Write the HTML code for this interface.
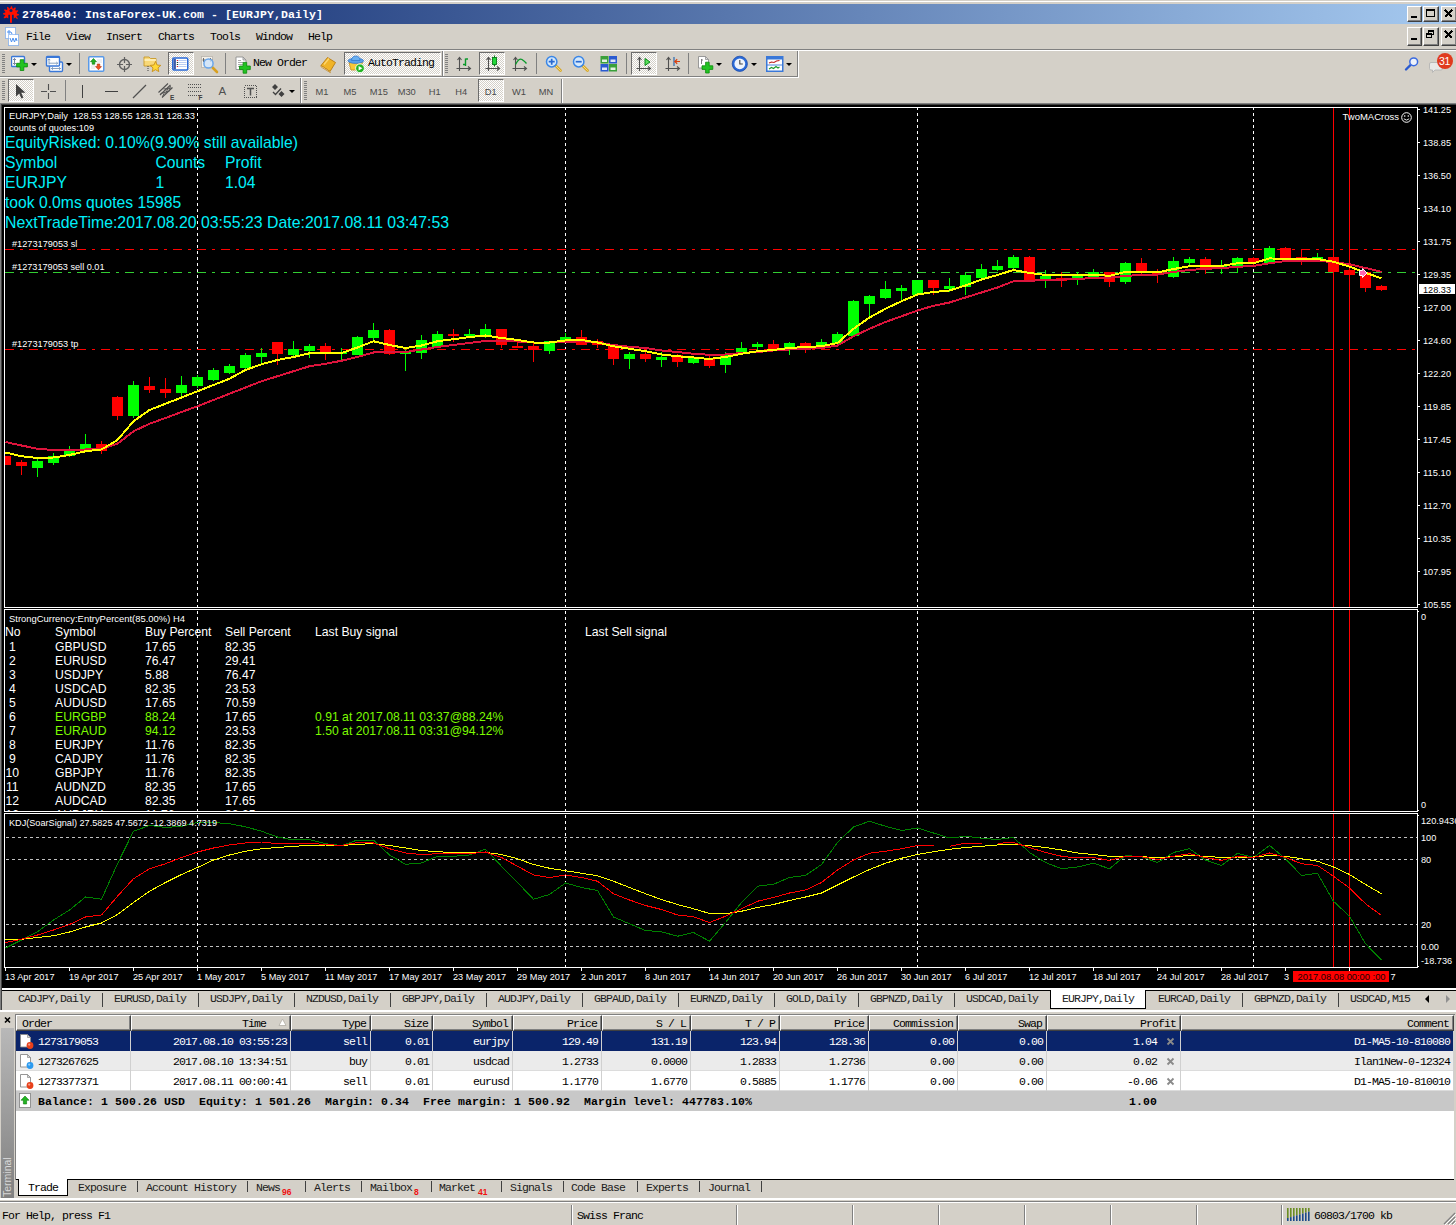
<!DOCTYPE html>
<html><head><meta charset="utf-8"><title>2785460: InstaForex-UK.com - [EURJPY,Daily]</title>
<style>
html,body{margin:0;padding:0}
body{width:1456px;height:1225px;background:#d4d0c8;position:relative;overflow:hidden;font-family:"Liberation Sans","DejaVu Sans",sans-serif;font-size:12px;color:#000}
.a{position:absolute}
.m{position:absolute;font-family:"Liberation Mono","DejaVu Sans Mono",monospace;font-size:11.5px;letter-spacing:-0.9px;white-space:pre;line-height:14px}
.mb{position:absolute;font-family:"Liberation Mono","DejaVu Sans Mono",monospace;font-size:11.5px;font-weight:bold;letter-spacing:0.1px;white-space:pre;line-height:14px}
.s{position:absolute;font-family:"Liberation Sans","DejaVu Sans",sans-serif;white-space:pre}
.btn{position:absolute;background:#d4d0c8;box-sizing:border-box;border:1px solid;border-color:#fff #404040 #404040 #fff;box-shadow:inset -1px -1px 0 #808080}
.chk{position:absolute;box-sizing:border-box;border:1px solid;border-color:#6c6c6c #fff #fff #6c6c6c;background-color:#fff;background-image:linear-gradient(45deg,#d4d0c8 25%,transparent 25%,transparent 75%,#d4d0c8 75%),linear-gradient(45deg,#d4d0c8 25%,transparent 25%,transparent 75%,#d4d0c8 75%);background-size:2px 2px;background-position:0 0,1px 1px}
.vsep{position:absolute;width:1px;background:#808080}
.bsep{position:absolute;width:1px;background:#808080;box-shadow:1px 0 0 #fff}
.grip{position:absolute;width:3px;background:repeating-linear-gradient(to bottom,#808080 0,#808080 1px,transparent 1px,transparent 2px)}
.tf{position:absolute;font-family:"Liberation Sans","DejaVu Sans",sans-serif;font-size:9.3px;color:#4a4a4a;top:86px;line-height:13px;white-space:pre}
.th{position:absolute;top:1015px;height:16px;box-sizing:border-box;background:#d4d0c8;border:1px solid;border-color:#fff #404040 #404040 #fff;box-shadow:inset -1px -1px 0 #808080}
.row{position:absolute;left:16px;width:1438px;height:20px}
.c{position:absolute;font-family:"Liberation Mono","DejaVu Sans Mono",monospace;font-size:11.5px;letter-spacing:-0.9px;white-space:pre;line-height:14px;text-align:right}
.cs{position:absolute;width:1px;height:60px;top:1031px;background:#c8c8c8}
</style></head><body>

<div class="a" style="left:0;top:1px;width:1456px;height:1px;background:#fff"></div>
<div class="a" style="left:0;top:4px;width:1456px;height:20px;background:linear-gradient(to right,#0a246a 0%,#a6caf0 100%)"></div>
<svg class="a" style="left:3px;top:6px" width="17" height="17" viewBox="0 0 17 17"><path d="M8.0 0.2 L9.0 0.3 L9.6 2.4 L10.3 2.7 L12.0 1.3 L12.9 1.9 L12.2 4.0 L12.8 4.5 L14.9 4.2 L15.4 5.1 L13.8 6.6 L13.9 7.4 L16.0 8.2 L15.9 9.2 L13.8 9.8 L13.5 10.5 L14.9 12.2 L14.3 13.1 L12.2 12.4 L11.7 13.0 L12.0 15.1 L11.1 15.6 L9.6 14.0 L8.8 14.1 L8.0 16.2 L7.0 16.1 L6.4 14.0 L5.7 13.7 L4.0 15.1 L3.1 14.5 L3.8 12.4 L3.2 11.9 L1.1 12.2 L0.6 11.3 L2.2 9.8 L2.1 9.0 L0.0 8.2 L0.1 7.2 L2.2 6.6 L2.5 5.9 L1.1 4.2 L1.7 3.3 L3.8 4.0 L4.3 3.4 L4.0 1.3 L4.9 0.8 L6.4 2.4 L7.2 2.3Z" fill="#ff1000"/>
<g fill="#0a246a"><circle cx="8" cy="4.6" r="1.5"/><rect x="5.3" y="8.8" width="1.8" height="4.4"/><rect x="8.9" y="8.8" width="1.8" height="4.4"/><path d="M3.2 11.5L7.1 13.2V17H0.5zM12.8 11.5L8.9 13.2V17H15.5z"/></g>
<rect x="7.1" y="6" width="1.8" height="10.8" fill="#ff1000"/></svg>
<div class="mb" style="left:22px;top:8px;color:#fff">2785460: InstaForex-UK.com - [EURJPY,Daily]</div>
<div class="btn" style="left:1407px;top:6px;width:15px;height:16px"></div>
<div class="a" style="left:1411px;top:16px;width:6px;height:2px;background:#000"></div>
<div class="btn" style="left:1423px;top:6px;width:16px;height:16px"></div>
<div class="a" style="left:1426px;top:9px;width:9px;height:8px;box-sizing:border-box;border:1px solid #000;border-top-width:2px"></div>
<div class="btn" style="left:1441px;top:6px;width:16px;height:16px"></div>
<svg class="a" style="left:1444px;top:9px" width="10" height="9" viewBox="0 0 10 9"><path d="M1 1 L8 8 M8 1 L1 8" stroke="#000" stroke-width="2" shape-rendering="crispEdges"/></svg>
<div class="btn" style="left:1407px;top:27px;width:15px;height:19px"></div>
<div class="a" style="left:1411px;top:38px;width:6px;height:2px;background:#000"></div>
<div class="btn" style="left:1423px;top:27px;width:16px;height:19px"></div>
<div class="a" style="left:1428px;top:30px;width:6px;height:5px;box-sizing:border-box;border:1px solid #000;border-top-width:2px"></div>
<div class="a" style="left:1426px;top:33px;width:6px;height:5px;box-sizing:border-box;border:1px solid #000;border-top-width:2px;background:#d4d0c8"></div>
<div class="btn" style="left:1441px;top:27px;width:16px;height:19px"></div>
<svg class="a" style="left:1444px;top:30px" width="10" height="9" viewBox="0 0 10 9"><path d="M1 1 L8 8 M8 1 L1 8" stroke="#000" stroke-width="2" shape-rendering="crispEdges"/></svg>
<svg class="a" style="left:4px;top:26px" width="17" height="20" viewBox="0 0 17 20"><rect x="1.5" y="1.5" width="10" height="11" fill="#fff" stroke="#4a90f0" stroke-dasharray="1 1"/><path d="M3 6h2v-2m0 4v-2h2l1 2" stroke="#4a90f0" fill="none"/><rect x="4.5" y="8.5" width="10" height="11" fill="#fff" stroke="#4a90f0" stroke-dasharray="1 1"/><path d="M6 12l1.5 4l1.5-4l1.5 4l1.5-4l1 3" stroke="#4a90f0" fill="none"/></svg>
<div class="m" style="left:26px;top:30px">File</div>
<div class="m" style="left:66px;top:30px">View</div>
<div class="m" style="left:106px;top:30px">Insert</div>
<div class="m" style="left:158px;top:30px">Charts</div>
<div class="m" style="left:210px;top:30px">Tools</div>
<div class="m" style="left:256px;top:30px">Window</div>
<div class="m" style="left:308px;top:30px">Help</div>
<div class="a" style="left:0;top:49px;width:1456px;height:1px;background:#808080"></div><div class="a" style="left:0;top:50px;width:1456px;height:1px;background:#fff"></div>
<div class="a" style="left:0;top:76px;width:798px;height:1px;background:#808080"></div><div class="a" style="left:0;top:77px;width:799px;height:1px;background:#fff"></div>
<div class="a" style="left:797px;top:51px;width:1px;height:26px;background:#808080"></div><div class="a" style="left:798px;top:51px;width:1px;height:27px;background:#fff"></div>
<div class="grip" style="left:2px;top:54px;height:20px"></div>
<svg class="a" style="left:11px;top:55px" width="19" height="19" viewBox="0 0 19 19" ><rect x="0.5" y="1.5" width="13" height="10" rx="1" fill="#fff" stroke="#3a78d8" stroke-width="1.4"/><path d="M3.5 3.5v6M2 5l1.5-1.5L5 5M2 8l1.5 1.5L5 8" stroke="#5a6a8a" fill="none" stroke-width="0.8"/><path d="M5.6 8.3h3.6v-3.6h3.6v3.6h3.6v3.6h-3.6v3.6h-3.6v-3.6h-3.6z" fill="#22c322" stroke="#0a8a0a" stroke-width="0.8"/></svg>
<div class="a" style="left:31px;top:63px;width:0;height:0;border-left:3px solid transparent;border-right:3px solid transparent;border-top:3px solid #000"></div>
<svg class="a" style="left:45px;top:55px" width="19" height="19" viewBox="0 0 19 19" ><rect x="4.5" y="7" width="13" height="9.5" rx="1" fill="#fff" stroke="#3a78d8" stroke-width="1.4"/><path d="M6.5 13.5h9M6.5 13.5l1.5-1.3M6.5 13.5l1.5 1.3M15.5 13.5l-1.5-1.3M15.5 13.5l-1.5 1.3" stroke="#6a8ab0" fill="none" stroke-width="0.8"/><rect x="1.5" y="1.5" width="13" height="9.5" rx="1" fill="#fff" stroke="#3a78d8" stroke-width="1.4"/><path d="M1.5 2.2h13" stroke="#3a78d8" stroke-width="1.6"/><path d="M4 4v5.5M2.8 5.2l1.2-1.4l1.2 1.4M4 8.2h8.5M11.3 7l1.4 1.2l-1.4 1.2" stroke="#6a8ab0" fill="none" stroke-width="0.8"/></svg>
<div class="a" style="left:66px;top:63px;width:0;height:0;border-left:3px solid transparent;border-right:3px solid transparent;border-top:3px solid #000"></div>
<div class="vsep" style="left:79px;top:53px;height:21px"></div>
<svg class="a" style="left:88px;top:56px" width="17" height="17" viewBox="0 0 17 17" ><rect x="0.75" y="0.75" width="15" height="14.5" rx="1" fill="#fff" stroke="#5a9ae8" stroke-width="1.5"/><path d="M9 4h5M9 6h5M3 10h4M3 12h4" stroke="#d4d8e0" stroke-width="0.8"/><path d="M5.5 2.5l3 3.2h-1.7v2.5h-2.6v-2.5h-1.7z" fill="#22b022" stroke="#0a7a0a" stroke-width="0.6"/><path d="M10.5 13.8l3-3.2h-1.7v-2.6h-2.6v2.6h-1.7z" fill="#f05020" stroke="#b03010" stroke-width="0.6"/></svg>
<svg class="a" style="left:116px;top:56px" width="18" height="18" viewBox="0 0 18 18" ><circle cx="8.5" cy="8.5" r="5" fill="none" stroke="#606060" stroke-width="1.4"/><path d="M8.5 1v6M8.5 10v6M1 8.5h6M10 8.5h6" stroke="#606060" stroke-width="1.2"/></svg>
<svg class="a" style="left:143px;top:55px" width="19" height="19" viewBox="0 0 19 19" ><path d="M1 2h5l1.5 1.5h5.5v7.5h-12z" fill="#f8d878" stroke="#c89a28" stroke-width="0.9"/><path d="M1.5 5h11.5" stroke="#fff3c0" stroke-width="1.6"/><path d="M5 11v6" stroke="#404040" stroke-dasharray="1 1"/><path d="M12.5 6.5l1.6 3.5l3.7 0.4l-2.8 2.5l0.8 3.7l-3.3-1.9l-3.3 1.9l0.8-3.7l-2.8-2.5l3.7-0.4z" fill="#ffd838" stroke="#c8901a" stroke-width="0.9"/></svg>
<div class="chk" style="left:168px;top:52px;width:26px;height:23px"></div>
<svg class="a" style="left:172px;top:56px" width="17" height="17" viewBox="0 0 17 17" ><rect x="0.75" y="2" width="15" height="12" rx="1.2" fill="#fff" stroke="#2a6ad8" stroke-width="1.5"/><rect x="1.5" y="2.8" width="2.4" height="10.5" fill="#3a5aa8"/><path d="M6 4.5h8.5M6 6.5h8.5M6 8.5h8.5M6 10.5h8.5" stroke="#a8c0f0" stroke-width="0.8"/><path d="M4.8 4.5h1.2M4.8 10.5h1.2" stroke="#e02020" stroke-width="1.2"/><path d="M4.8 6.5h1.2M4.8 8.5h1.2" stroke="#204020" stroke-width="1.2"/></svg>
<svg class="a" style="left:200px;top:55px" width="19" height="19" viewBox="0 0 19 19" ><rect x="1.5" y="1.5" width="11" height="11" fill="#f4f0e8" stroke="#b8b4ac" stroke-width="0.8"/><path d="M3.5 3v4M10.5 3v4M2.5 5h3M9.5 5h3" stroke="#606060" stroke-width="0.9"/><path d="M12.5 12.5l4.5 4.5" stroke="#d8a020" stroke-width="2.6" stroke-linecap="round"/><circle cx="8.5" cy="8.5" r="4.6" fill="#cfe4fa" fill-opacity="0.85" stroke="#6aa6ea" stroke-width="1.5"/></svg>
<div class="vsep" style="left:225px;top:53px;height:21px"></div>
<svg class="a" style="left:235px;top:55px" width="18" height="20" viewBox="0 0 18 20" ><path d="M1 2h7l3 3v9.5h-10z" fill="#fff" stroke="#909090" stroke-width="0.9"/><path d="M8 2v3h3z" fill="#e0e0e0" stroke="#909090" stroke-width="0.8"/><path d="M3 7.5h5M3 9.5h5M3 5.5h3M3 11.5h2" stroke="#a0a0a0" stroke-width="0.9"/><path d="M4.5 11h3.6v-3.6h3.6v3.6h3.6v3.6h-3.6v3.6h-3.6v-3.6h-3.6z" fill="#22c322" stroke="#0a8a0a" stroke-width="0.8"/></svg>
<div class="m" style="left:253px;top:56px">New Order</div>
<svg class="a" style="left:319px;top:56px" width="18" height="18" viewBox="0 0 18 18" ><path d="M2 9.5l6.5-8l8 5l-5.5 9z" fill="#f0b428" stroke="#b87a10" stroke-width="0.9"/><path d="M2 9.5l9 6l0.4 1.2l-9.2-5.7z" fill="#fff4d0" stroke="#b87a10" stroke-width="0.7"/><path d="M5 8.5l5-6" stroke="#ffd870" stroke-width="1.2"/></svg>
<div class="chk" style="left:344px;top:52px;width:97px;height:23px"></div>
<svg class="a" style="left:347px;top:55px" width="19" height="19" viewBox="0 0 19 19" ><path d="M2 7.5l2 7.5h9l2.5-7.5z" fill="#f8c838" stroke="#c8901a" stroke-width="0.8"/><ellipse cx="8.8" cy="5.8" rx="7.8" ry="2.6" fill="#5aa0e8" stroke="#2a70c8" stroke-width="0.7"/><path d="M4.6 5.5q0-4.5 4.2-4.5t4.2 4.5z" fill="#6ab0f0" stroke="#2a70c8" stroke-width="0.7"/><circle cx="13" cy="13.3" r="4.4" fill="#22b422" stroke="#fff" stroke-width="0.9"/><path d="M11.6 11l3.8 2.3l-3.8 2.3z" fill="#fff"/></svg>
<div class="m" style="left:368px;top:56px">AutoTrading</div>
<div class="bsep" style="left:442px;top:51px;height:25px"></div>
<div class="grip" style="left:445px;top:54px;height:20px"></div>
<svg class="a" style="left:456px;top:55px" width="17" height="18" viewBox="0 0 17 18" ><path d="M3.5 2.5v13.5M0.5 13.5h14M1.5 5l2-2.5l2 2.5M12 11.5l2.5 2l-2.5 2" stroke="#505050" fill="none" stroke-width="1.1"/><path d="M9.5 3.5v7.5M9.5 4h2.5M7 9.5h2.5" stroke="#0a9a2a" stroke-width="1.4" fill="none"/></svg>
<div class="chk" style="left:479px;top:52px;width:26px;height:23px"></div>
<svg class="a" style="left:485px;top:55px" width="17" height="18" viewBox="0 0 17 18" ><path d="M3.5 2.5v13.5M0.5 13.5h14M1.5 5l2-2.5l2 2.5M12 11.5l2.5 2l-2.5 2" stroke="#505050" fill="none" stroke-width="1.1"/><path d="M9.5 0.5v11" stroke="#0a7a1a" stroke-width="1"/><rect x="7.5" y="2.5" width="4" height="7" fill="#22d83a" stroke="#0a7a1a" stroke-width="0.9"/></svg>
<svg class="a" style="left:512px;top:55px" width="17" height="18" viewBox="0 0 17 18" ><path d="M3.5 2.5v13.5M0.5 13.5h14M1.5 5l2-2.5l2 2.5M12 11.5l2.5 2l-2.5 2" stroke="#505050" fill="none" stroke-width="1.1"/><path d="M3.5 9.5q3.5-7 6.5-5t4.5 4" stroke="#0a9a2a" stroke-width="1.3" fill="none"/></svg>
<div class="vsep" style="left:536px;top:53px;height:21px"></div>
<svg class="a" style="left:545px;top:55px" width="18" height="18" viewBox="0 0 18 18" ><path d="M10.5 10.5l5 5" stroke="#d8a828" stroke-width="2.8" stroke-linecap="round"/><path d="M10.5 10.5l5 5" stroke="#f8e088" stroke-width="0.9" stroke-linecap="round"/><circle cx="6.7" cy="6.7" r="5.2" fill="#d4e8fc" stroke="#3a86e6" stroke-width="1.5"/><path d="M3.7 6.7h6M6.7 3.7v6" stroke="#2a6ad0" stroke-width="1.7"/></svg>
<svg class="a" style="left:572px;top:55px" width="18" height="18" viewBox="0 0 18 18" ><path d="M10.5 10.5l5 5" stroke="#d8a828" stroke-width="2.8" stroke-linecap="round"/><path d="M10.5 10.5l5 5" stroke="#f8e088" stroke-width="0.9" stroke-linecap="round"/><circle cx="6.7" cy="6.7" r="5.2" fill="#d4e8fc" stroke="#3a86e6" stroke-width="1.5"/><path d="M3.7 6.7h6" stroke="#2a6ad0" stroke-width="1.7"/></svg>
<svg class="a" style="left:600px;top:55px" width="18" height="18" viewBox="0 0 18 18" ><rect x="0.5" y="1" width="8" height="7.5" fill="#3aa03a"/><rect x="9" y="1" width="8" height="7.5" fill="#2a5ad0"/><rect x="0.5" y="9" width="8" height="7.5" fill="#2a5ad0"/><rect x="9" y="9" width="8" height="7.5" fill="#3aa03a"/><path d="M2 4.5h5v2.5h-5zM10.5 4.5h5v2.5h-5zM2 12.5h5v2.5h-5zM10.5 12.5h5v2.5h-5z" fill="#fff" fill-opacity="0.85"/></svg>
<div class="vsep" style="left:626px;top:53px;height:21px"></div>
<div class="chk" style="left:631px;top:52px;width:26px;height:23px"></div>
<svg class="a" style="left:636px;top:55px" width="17" height="18" viewBox="0 0 17 18" ><path d="M3.5 2.5v13.5M0.5 13.5h14M1.5 5l2-2.5l2 2.5M12 11.5l2.5 2l-2.5 2" stroke="#505050" fill="none" stroke-width="1.1"/><path d="M9 3.5l5 3.5l-5 3.5z" fill="#58e058" stroke="#0a8a1a" stroke-width="1"/></svg>
<svg class="a" style="left:665px;top:55px" width="17" height="18" viewBox="0 0 17 18" ><path d="M3.5 2.5v13.5M0.5 13.5h14M1.5 5l2-2.5l2 2.5M12 11.5l2.5 2l-2.5 2" stroke="#505050" fill="none" stroke-width="1.1"/><path d="M9 2v9" stroke="#2a6ab0" stroke-width="1.2"/><path d="M15 6.5h-5M12.2 4.3l-2.4 2.2l2.4 2.2" stroke="#d84010" stroke-width="1.2" fill="none"/></svg>
<div class="vsep" style="left:688px;top:53px;height:21px"></div>
<svg class="a" style="left:697px;top:55px" width="18" height="20" viewBox="0 0 18 20" ><path d="M1.5 1.5h7l3 3v8.5h-10z" fill="#fff" stroke="#909090" stroke-width="0.9"/><path d="M8.5 1.5v3h3z" fill="#e0e0e0" stroke="#909090" stroke-width="0.8"/><path d="M4.5 4v5M4.5 5h1.5" stroke="#707070" stroke-width="0.9"/><path d="M5 10.8h3.6v-3.6h3.6v3.6h3.6v3.6h-3.6v3.6h-3.6v-3.6h-3.6z" fill="#22c322" stroke="#0a8a0a" stroke-width="0.8"/></svg>
<div class="a" style="left:716px;top:63px;width:0;height:0;border-left:3px solid transparent;border-right:3px solid transparent;border-top:3px solid #000"></div>
<svg class="a" style="left:731px;top:55px" width="18" height="18" viewBox="0 0 18 18" ><circle cx="8.8" cy="8.8" r="7.6" fill="#2a6ad8" stroke="#1a4aa8" stroke-width="0.8"/><circle cx="8.8" cy="8.8" r="5.4" fill="#eef4fc"/><path d="M8.8 5v4h3" stroke="#404040" stroke-width="1.1" fill="none"/></svg>
<div class="a" style="left:751px;top:63px;width:0;height:0;border-left:3px solid transparent;border-right:3px solid transparent;border-top:3px solid #000"></div>
<svg class="a" style="left:766px;top:56px" width="18" height="17" viewBox="0 0 18 17" ><rect x="0.75" y="0.75" width="16" height="14.5" fill="#fff" stroke="#3a78d8" stroke-width="1.5"/><rect x="1" y="1" width="15.5" height="2.5" fill="#3a78d8"/><path d="M1 9h15.5" stroke="#3a78d8" stroke-width="0.9"/><path d="M3 7l2.5-1l2.5 0.5l2.5-1.5l3-0.5" stroke="#c02020" stroke-width="1.1" fill="none"/><path d="M3 13l2.5-1.5l2 1l2.5-2l2 1.5l1.5-1" stroke="#1a9a2a" stroke-width="1.1" fill="none"/></svg>
<div class="a" style="left:786px;top:63px;width:0;height:0;border-left:3px solid transparent;border-right:3px solid transparent;border-top:3px solid #000"></div>
<svg class="a" style="left:1404px;top:56px" width="16" height="16" viewBox="0 0 16 16" ><path d="M2 13.5l5-5" stroke="#2a5ad0" stroke-width="2.4" stroke-linecap="round"/><circle cx="9.7" cy="5.8" r="3.9" fill="#eef2fa" stroke="#3a6ae0" stroke-width="1.5"/></svg>
<svg class="a" style="left:1429px;top:61px" width="16" height="13" viewBox="0 0 16 13" ><path d="M2 1.5h10a1.5 1.5 0 0 1 1.5 1.5v4.5a1.5 1.5 0 0 1-1.5 1.5h-6l-2.5 2.5v-2.5h-1.5a1.5 1.5 0 0 1-1.5-1.5v-4.5a1.5 1.5 0 0 1 1.5-1.5z" fill="#e8e8e8" stroke="#b0b0b0" stroke-width="0.8"/></svg>
<div class="a" style="left:1437px;top:53px;width:16px;height:16px;border-radius:8px;background:#e03a1e"></div>
<div class="s" style="left:1439px;top:55px;font-size:10.5px;line-height:12px;color:#fff;letter-spacing:-0.3px">31</div>
<div class="grip" style="left:2px;top:81px;height:20px"></div>
<div class="chk" style="left:8px;top:79px;width:26px;height:23px"></div>
<svg class="a" style="left:14px;top:83px" width="14" height="17" viewBox="0 0 14 17" ><path d="M2 1v12.5l3.2-3l2.2 5l2-0.9l-2.2-4.9h4.3z" fill="#404040"/></svg>
<svg class="a" style="left:40px;top:83px" width="17" height="17" viewBox="0 0 17 17" ><path d="M8.5 1v6M8.5 10v6M1 8.5h6M10 8.5h6" stroke="#505050" stroke-width="1.1"/></svg>
<div class="vsep" style="left:65px;top:80px;height:21px"></div>
<div class="a" style="left:82px;top:85px;width:1px;height:13px;background:#404040"></div>
<div class="a" style="left:105px;top:91px;width:13px;height:1px;background:#404040"></div>
<svg class="a" style="left:132px;top:84px" width="15" height="15" viewBox="0 0 15 15" ><path d="M1 14L14 1" stroke="#505050" stroke-width="1.2"/></svg>
<svg class="a" style="left:158px;top:83px" width="18" height="17" viewBox="0 0 18 17" ><path d="M0.5 9.5L10 0.5M2 12L12.5 2M4 14.5L14.5 4.5" stroke="#505050" stroke-width="1.1" fill="none"/><path d="M2.5 10.5l9-2.5M5.5 6l8 -1M6.5 9.5l-2 4M10 5.5l-2.5 5M12.5 3l-1.5 4" stroke="#505050" stroke-width="0.9" fill="none"/><text x="12" y="17" font-family="Liberation Sans,sans-serif" font-size="6.5" font-weight="bold" fill="#404040">E</text></svg>
<svg class="a" style="left:188px;top:83px" width="18" height="17" viewBox="0 0 18 17" ><path d="M0 1.5h13M0 4.5h13M0 8.5h13M0 12.5h13" stroke="#505050" stroke-width="1" stroke-dasharray="1 1"/><text x="10.5" y="17" font-family="Liberation Sans,sans-serif" font-size="6.5" font-weight="bold" fill="#404040">F</text></svg>
<div class="s" style="left:218.5px;top:84px;font-size:11.5px;line-height:15px;color:#505050">A</div>
<svg class="a" style="left:243px;top:83px" width="16" height="16" viewBox="0 0 16 16" ><rect x="1.5" y="2.5" width="12" height="12" fill="none" stroke="#505050" stroke-dasharray="1 1" shape-rendering="crispEdges"/><path d="M4 5.5h7M7.5 5.5v7" stroke="#505050" stroke-width="1.5"/></svg>
<svg class="a" style="left:271px;top:83px" width="16" height="16" viewBox="0 0 16 16" ><path d="M4 1l3 3l-3 3l-3-3z M10.5 8l3 3l-3 3l-3-3z" fill="#404040"/><path d="M2 9l2.5 2.5l5.5-6" stroke="#404040" stroke-width="1.3" fill="none"/></svg>
<div class="a" style="left:289px;top:90px;width:0;height:0;border-left:3px solid transparent;border-right:3px solid transparent;border-top:3px solid #000"></div>
<div class="bsep" style="left:300px;top:78px;height:25px"></div>
<div class="grip" style="left:304px;top:81px;height:20px"></div>
<div class="chk" style="left:478px;top:79px;width:26px;height:23px"></div>
<div class="tf" style="left:315.5px">M1</div>
<div class="tf" style="left:343.5px">M5</div>
<div class="tf" style="left:369.8px">M15</div>
<div class="tf" style="left:397.7px">M30</div>
<div class="tf" style="left:428.8px">H1</div>
<div class="tf" style="left:455.3px">H4</div>
<div class="tf" style="left:484.7px">D1</div>
<div class="tf" style="left:511.9px">W1</div>
<div class="tf" style="left:538.7px">MN</div>
<div class="a" style="left:561px;top:79px;width:1px;height:24px;background:#808080"></div><div class="a" style="left:562px;top:79px;width:1px;height:24px;background:#fff"></div>
<svg class="a" style="left:0;top:103px" width="1456" height="887" viewBox="0 103 1456 887" font-family="Liberation Sans,DejaVu Sans,sans-serif">
<defs><clipPath id="cm"><rect x="5" y="108" width="1412" height="499"/></clipPath><clipPath id="c1"><rect x="5" y="610" width="1412" height="201"/></clipPath><clipPath id="c2"><rect x="5" y="814" width="1412" height="153"/></clipPath><clipPath id="cr"><rect x="1418" y="103" width="38" height="887"/></clipPath></defs>
<g shape-rendering="crispEdges">
<rect x="0" y="103" width="1456" height="885" fill="#000"/>
<rect x="0" y="103" width="1456" height="1" fill="#808080"/><rect x="1" y="104" width="1455" height="1" fill="#404040"/>
<rect x="0" y="103" width="1" height="887" fill="#808080"/><rect x="1" y="104" width="1" height="886" fill="#404040"/>
<rect x="2" y="988" width="1454" height="2" fill="#fff"/>
<rect x="4" y="107" width="1" height="501" fill="#fff"/>
<rect x="4" y="609" width="1" height="203" fill="#fff"/>
<rect x="4" y="813" width="1" height="155" fill="#fff"/>
<rect x="1417" y="107" width="1" height="501" fill="#fff"/>
<rect x="1417" y="609" width="1" height="203" fill="#fff"/>
<rect x="1417" y="813" width="1" height="155" fill="#fff"/>
<rect x="4" y="107" width="1414" height="1" fill="#fff"/>
<rect x="4" y="607" width="1414" height="1" fill="#fff"/>
<rect x="4" y="609" width="1414" height="1" fill="#fff"/>
<rect x="4" y="811" width="1414" height="1" fill="#fff"/>
<rect x="4" y="813" width="1414" height="1" fill="#fff"/>
<rect x="4" y="967" width="1414" height="1" fill="#fff"/>
<path d="M197.5 107V607M197.5 611V811M197.5 815V967" stroke="#fff" stroke-width="1" stroke-dasharray="3 3" fill="none"/>
<path d="M565.5 107V607M565.5 611V811M565.5 815V967" stroke="#fff" stroke-width="1" stroke-dasharray="3 3" fill="none"/>
<path d="M917.5 107V607M917.5 611V811M917.5 815V967" stroke="#fff" stroke-width="1" stroke-dasharray="3 3" fill="none"/>
<path d="M1253.5 107V607M1253.5 611V811M1253.5 815V967" stroke="#fff" stroke-width="1" stroke-dasharray="3 3" fill="none"/>
<path d="M5 249.5H1417" stroke="#ff0000" stroke-width="1" stroke-dasharray="9 6 3 6" fill="none"/>
<path d="M5 272.5H1417" stroke="#32cd32" stroke-width="1" stroke-dasharray="9 6 3 6" fill="none"/>
<path d="M5 349.5H1417" stroke="#ff0000" stroke-width="1" stroke-dasharray="9 6 3 6" fill="none"/>
<path d="M6 837.5H1417" stroke="#c0c0c0" stroke-width="1" stroke-dasharray="3 3" fill="none"/>
<path d="M6 859.5H1417" stroke="#c0c0c0" stroke-width="1" stroke-dasharray="3 3" fill="none"/>
<path d="M6 924.5H1417" stroke="#c0c0c0" stroke-width="1" stroke-dasharray="3 3" fill="none"/>
<path d="M6 946.5H1417" stroke="#c0c0c0" stroke-width="1" stroke-dasharray="3 3" fill="none"/>
<path d="M1333.5 108V607M1333.5 610V811M1333.5 814V967" stroke="#ff0000" stroke-width="1" fill="none"/>
<path d="M1349.5 108V607M1349.5 610V811M1349.5 814V967" stroke="#ff0000" stroke-width="1" fill="none"/>
<g clip-path="url(#cm)">
<rect x="5" y="456" width="1" height="9" fill="#ff0000"/>
<rect x="0" y="456" width="11" height="9" fill="#ff0000"/>
<rect x="21" y="460" width="1" height="15" fill="#ff0000"/>
<rect x="16" y="462" width="11" height="4" fill="#ff0000"/>
<rect x="37" y="459" width="1" height="18" fill="#00ff00"/>
<rect x="32" y="461" width="11" height="7" fill="#00ff00"/>
<rect x="53" y="453" width="1" height="12" fill="#00ff00"/>
<rect x="48" y="456" width="11" height="7" fill="#00ff00"/>
<rect x="69" y="446" width="1" height="11" fill="#00ff00"/>
<rect x="64" y="451" width="11" height="5" fill="#00ff00"/>
<rect x="85" y="434" width="1" height="17" fill="#00ff00"/>
<rect x="80" y="444" width="11" height="6" fill="#00ff00"/>
<rect x="101" y="441" width="1" height="13" fill="#ff0000"/>
<rect x="96" y="444" width="11" height="7" fill="#ff0000"/>
<rect x="117" y="396" width="1" height="24" fill="#ff0000"/>
<rect x="112" y="397" width="11" height="19" fill="#ff0000"/>
<rect x="133" y="381" width="1" height="37" fill="#00ff00"/>
<rect x="128" y="385" width="11" height="31" fill="#00ff00"/>
<rect x="149" y="377" width="1" height="16" fill="#ff0000"/>
<rect x="144" y="386" width="11" height="4" fill="#ff0000"/>
<rect x="165" y="378" width="1" height="20" fill="#ff0000"/>
<rect x="160" y="389" width="11" height="4" fill="#ff0000"/>
<rect x="181" y="376" width="1" height="20" fill="#00ff00"/>
<rect x="176" y="385" width="11" height="8" fill="#00ff00"/>
<rect x="197" y="375" width="1" height="13" fill="#00ff00"/>
<rect x="192" y="377" width="11" height="9" fill="#00ff00"/>
<rect x="213" y="368" width="1" height="13" fill="#00ff00"/>
<rect x="208" y="370" width="11" height="10" fill="#00ff00"/>
<rect x="229" y="364" width="1" height="10" fill="#00ff00"/>
<rect x="224" y="366" width="11" height="7" fill="#00ff00"/>
<rect x="245" y="353" width="1" height="17" fill="#00ff00"/>
<rect x="240" y="355" width="11" height="13" fill="#00ff00"/>
<rect x="261" y="348" width="1" height="17" fill="#00ff00"/>
<rect x="256" y="353" width="11" height="4" fill="#00ff00"/>
<rect x="277" y="342" width="1" height="23" fill="#ff0000"/>
<rect x="272" y="342" width="11" height="12" fill="#ff0000"/>
<rect x="293" y="341" width="1" height="15" fill="#00ff00"/>
<rect x="288" y="349" width="11" height="6" fill="#00ff00"/>
<rect x="309" y="344" width="1" height="14" fill="#00ff00"/>
<rect x="304" y="346" width="11" height="5" fill="#00ff00"/>
<rect x="325" y="343" width="1" height="17" fill="#ff0000"/>
<rect x="320" y="346" width="11" height="7" fill="#ff0000"/>
<rect x="341" y="348" width="1" height="12" fill="#00ff00"/>
<rect x="336" y="352" width="11" height="2" fill="#00ff00"/>
<rect x="357" y="336" width="1" height="19" fill="#00ff00"/>
<rect x="352" y="337" width="11" height="18" fill="#00ff00"/>
<rect x="373" y="323" width="1" height="19" fill="#00ff00"/>
<rect x="368" y="330" width="11" height="8" fill="#00ff00"/>
<rect x="389" y="329" width="1" height="26" fill="#ff0000"/>
<rect x="384" y="330" width="11" height="24" fill="#ff0000"/>
<rect x="405" y="349" width="1" height="22" fill="#00ff00"/>
<rect x="400" y="352" width="11" height="2" fill="#00ff00"/>
<rect x="421" y="335" width="1" height="24" fill="#00ff00"/>
<rect x="416" y="340" width="11" height="13" fill="#00ff00"/>
<rect x="437" y="331" width="1" height="17" fill="#00ff00"/>
<rect x="432" y="334" width="11" height="13" fill="#00ff00"/>
<rect x="453" y="329" width="1" height="13" fill="#ff0000"/>
<rect x="448" y="334" width="11" height="2" fill="#ff0000"/>
<rect x="469" y="329" width="1" height="9" fill="#00ff00"/>
<rect x="464" y="334" width="11" height="2" fill="#00ff00"/>
<rect x="485" y="324" width="1" height="14" fill="#00ff00"/>
<rect x="480" y="329" width="11" height="7" fill="#00ff00"/>
<rect x="501" y="329" width="1" height="19" fill="#ff0000"/>
<rect x="496" y="329" width="11" height="16" fill="#ff0000"/>
<rect x="517" y="342" width="1" height="6" fill="#ff0000"/>
<rect x="512" y="346" width="11" height="2" fill="#ff0000"/>
<rect x="533" y="342" width="1" height="20" fill="#ff0000"/>
<rect x="528" y="346" width="11" height="4" fill="#ff0000"/>
<rect x="549" y="341" width="1" height="13" fill="#00ff00"/>
<rect x="544" y="341" width="11" height="10" fill="#00ff00"/>
<rect x="565" y="333" width="1" height="10" fill="#00ff00"/>
<rect x="560" y="337" width="11" height="6" fill="#00ff00"/>
<rect x="581" y="330" width="1" height="15" fill="#ff0000"/>
<rect x="576" y="337" width="11" height="8" fill="#ff0000"/>
<rect x="597" y="339" width="1" height="9" fill="#ff0000"/>
<rect x="592" y="341" width="11" height="4" fill="#ff0000"/>
<rect x="613" y="344" width="1" height="21" fill="#ff0000"/>
<rect x="608" y="345" width="11" height="14" fill="#ff0000"/>
<rect x="629" y="352" width="1" height="17" fill="#00ff00"/>
<rect x="624" y="354" width="11" height="5" fill="#00ff00"/>
<rect x="645" y="352" width="1" height="10" fill="#ff0000"/>
<rect x="640" y="354" width="11" height="5" fill="#ff0000"/>
<rect x="661" y="352" width="1" height="15" fill="#00ff00"/>
<rect x="656" y="357" width="11" height="3" fill="#00ff00"/>
<rect x="677" y="354" width="1" height="13" fill="#ff0000"/>
<rect x="672" y="355" width="11" height="7" fill="#ff0000"/>
<rect x="693" y="356" width="1" height="8" fill="#00ff00"/>
<rect x="688" y="357" width="11" height="6" fill="#00ff00"/>
<rect x="709" y="354" width="1" height="14" fill="#ff0000"/>
<rect x="704" y="358" width="11" height="8" fill="#ff0000"/>
<rect x="725" y="352" width="1" height="21" fill="#00ff00"/>
<rect x="720" y="354" width="11" height="11" fill="#00ff00"/>
<rect x="741" y="342" width="1" height="13" fill="#00ff00"/>
<rect x="736" y="348" width="11" height="5" fill="#00ff00"/>
<rect x="757" y="342" width="1" height="9" fill="#00ff00"/>
<rect x="752" y="344" width="11" height="3" fill="#00ff00"/>
<rect x="773" y="340" width="1" height="10" fill="#ff0000"/>
<rect x="768" y="344" width="11" height="5" fill="#ff0000"/>
<rect x="789" y="342" width="1" height="13" fill="#00ff00"/>
<rect x="784" y="343" width="11" height="5" fill="#00ff00"/>
<rect x="805" y="342" width="1" height="11" fill="#ff0000"/>
<rect x="800" y="343" width="11" height="4" fill="#ff0000"/>
<rect x="821" y="339" width="1" height="10" fill="#00ff00"/>
<rect x="816" y="342" width="11" height="6" fill="#00ff00"/>
<rect x="837" y="332" width="1" height="13" fill="#00ff00"/>
<rect x="832" y="334" width="11" height="10" fill="#00ff00"/>
<rect x="853" y="300" width="1" height="37" fill="#00ff00"/>
<rect x="848" y="301" width="11" height="35" fill="#00ff00"/>
<rect x="869" y="295" width="1" height="21" fill="#00ff00"/>
<rect x="864" y="296" width="11" height="8" fill="#00ff00"/>
<rect x="885" y="281" width="1" height="18" fill="#00ff00"/>
<rect x="880" y="289" width="11" height="9" fill="#00ff00"/>
<rect x="901" y="285" width="1" height="16" fill="#00ff00"/>
<rect x="896" y="288" width="11" height="3" fill="#00ff00"/>
<rect x="917" y="280" width="1" height="16" fill="#00ff00"/>
<rect x="912" y="280" width="11" height="15" fill="#00ff00"/>
<rect x="933" y="280" width="1" height="15" fill="#ff0000"/>
<rect x="928" y="280" width="11" height="8" fill="#ff0000"/>
<rect x="949" y="278" width="1" height="14" fill="#00ff00"/>
<rect x="944" y="286" width="11" height="3" fill="#00ff00"/>
<rect x="965" y="273" width="1" height="22" fill="#00ff00"/>
<rect x="960" y="275" width="11" height="12" fill="#00ff00"/>
<rect x="981" y="264" width="1" height="15" fill="#00ff00"/>
<rect x="976" y="269" width="11" height="9" fill="#00ff00"/>
<rect x="997" y="260" width="1" height="11" fill="#00ff00"/>
<rect x="992" y="266" width="11" height="4" fill="#00ff00"/>
<rect x="1013" y="255" width="1" height="14" fill="#00ff00"/>
<rect x="1008" y="257" width="11" height="11" fill="#00ff00"/>
<rect x="1029" y="256" width="1" height="25" fill="#ff0000"/>
<rect x="1024" y="257" width="11" height="23" fill="#ff0000"/>
<rect x="1045" y="270" width="1" height="18" fill="#00ff00"/>
<rect x="1040" y="276" width="11" height="3" fill="#00ff00"/>
<rect x="1061" y="272" width="1" height="15" fill="#ff0000"/>
<rect x="1056" y="278" width="11" height="3" fill="#ff0000"/>
<rect x="1077" y="272" width="1" height="13" fill="#00ff00"/>
<rect x="1072" y="275" width="11" height="5" fill="#00ff00"/>
<rect x="1093" y="269" width="1" height="10" fill="#00ff00"/>
<rect x="1088" y="272" width="11" height="6" fill="#00ff00"/>
<rect x="1109" y="272" width="1" height="15" fill="#ff0000"/>
<rect x="1104" y="272" width="11" height="10" fill="#ff0000"/>
<rect x="1125" y="262" width="1" height="22" fill="#00ff00"/>
<rect x="1120" y="263" width="11" height="19" fill="#00ff00"/>
<rect x="1141" y="258" width="1" height="16" fill="#ff0000"/>
<rect x="1136" y="263" width="11" height="10" fill="#ff0000"/>
<rect x="1157" y="269" width="1" height="14" fill="#ff0000"/>
<rect x="1152" y="271" width="11" height="4" fill="#ff0000"/>
<rect x="1173" y="257" width="1" height="21" fill="#00ff00"/>
<rect x="1168" y="261" width="11" height="16" fill="#00ff00"/>
<rect x="1189" y="257" width="1" height="10" fill="#00ff00"/>
<rect x="1184" y="259" width="11" height="4" fill="#00ff00"/>
<rect x="1205" y="257" width="1" height="17" fill="#ff0000"/>
<rect x="1200" y="259" width="11" height="10" fill="#ff0000"/>
<rect x="1221" y="260" width="1" height="14" fill="#00ff00"/>
<rect x="1216" y="266" width="11" height="3" fill="#00ff00"/>
<rect x="1237" y="257" width="1" height="16" fill="#00ff00"/>
<rect x="1232" y="258" width="11" height="9" fill="#00ff00"/>
<rect x="1253" y="257" width="1" height="8" fill="#ff0000"/>
<rect x="1248" y="258" width="11" height="5" fill="#ff0000"/>
<rect x="1269" y="246" width="1" height="17" fill="#00ff00"/>
<rect x="1264" y="248" width="11" height="15" fill="#00ff00"/>
<rect x="1285" y="247" width="1" height="12" fill="#ff0000"/>
<rect x="1280" y="248" width="11" height="11" fill="#ff0000"/>
<rect x="1301" y="249" width="1" height="16" fill="#ff0000"/>
<rect x="1296" y="257" width="11" height="2" fill="#ff0000"/>
<rect x="1317" y="253" width="1" height="9" fill="#00ff00"/>
<rect x="1312" y="257" width="11" height="5" fill="#00ff00"/>
<rect x="1333" y="256" width="1" height="17" fill="#ff0000"/>
<rect x="1328" y="257" width="11" height="15" fill="#ff0000"/>
<rect x="1349" y="269" width="1" height="7" fill="#ff0000"/>
<rect x="1344" y="270" width="11" height="5" fill="#ff0000"/>
<rect x="1365" y="272" width="1" height="20" fill="#ff0000"/>
<rect x="1360" y="272" width="11" height="16" fill="#ff0000"/>
<rect x="1381" y="285" width="1" height="6" fill="#ff0000"/>
<rect x="1376" y="286" width="11" height="4" fill="#ff0000"/>
<path d="M5.5 442L21.5 445.5L37.5 448.75L53.5 450L69.5 450L85.5 449.5L101.5 448.75L117.5 443.75L133.5 431.25L149.5 423.75L165.5 418L181.5 412L197.5 406.25L213.5 400L229.5 393.75L245.5 387.5L261.5 381.25L277.5 376.25L293.5 371.25L309.5 366.25L325.5 363.75L341.5 360.75L357.5 357L373.5 352.5L389.5 352L405.5 352L421.5 349.5L437.5 347L453.5 345L469.5 343L485.5 341L501.5 341L517.5 341.5L533.5 342.5L549.5 342.5L565.5 342L581.5 341.25L597.5 342.5L613.5 345L629.5 346.75L645.5 348L661.5 350.5L677.5 352L693.5 353.75L709.5 354.8L725.5 354.5L741.5 353L757.5 352L773.5 350.5L789.5 349.5L805.5 348.75L821.5 348L837.5 345.5L853.5 336.25L869.5 328.75L885.5 322L901.5 316.25L917.5 310.5L933.5 305.75L949.5 302.5L965.5 297.5L981.5 292.5L997.5 287.5L1013.5 281.25L1029.5 280.75L1045.5 280L1061.5 279.6L1077.5 279L1093.5 277.9L1109.5 277.6L1125.5 276L1141.5 274.8L1157.5 274.6L1173.5 272L1189.5 270L1205.5 268.7L1221.5 268.2L1237.5 266.8L1253.5 265.9L1269.5 263.2L1285.5 261.1L1301.5 260.8L1317.5 260.8L1333.5 262.2L1349.5 264.3L1365.5 268L1381.5 271.8" stroke="#dc143c" stroke-width="2" fill="none" stroke-linejoin="round"/>
<path d="M5.5 452.5L21.5 456.25L37.5 458L53.5 457.5L69.5 455L85.5 451.25L101.5 449.5L117.5 440L133.5 421.25L149.5 410L165.5 403.75L181.5 397.5L197.5 391.25L213.5 385L229.5 378.75L245.5 370L261.5 364.25L277.5 360L293.5 357L309.5 353.25L325.5 353L341.5 353L357.5 347.5L373.5 341.25L389.5 345L405.5 348L421.5 345.5L437.5 341.25L453.5 339.25L469.5 337L485.5 335.5L501.5 338L517.5 340L533.5 342.5L549.5 342.5L565.5 340.5L581.5 340L597.5 342.5L613.5 346.25L629.5 348.75L645.5 351.25L661.5 354.5L677.5 356.25L693.5 357.5L709.5 359L725.5 357L741.5 353.75L757.5 351.25L773.5 350L789.5 348L805.5 347L821.5 346.25L837.5 343L853.5 328.75L869.5 317.5L885.5 308.75L901.5 301.25L917.5 294.5L933.5 292L949.5 290.5L965.5 285.5L981.5 279.5L997.5 275L1013.5 270L1029.5 273L1045.5 275L1061.5 275.1L1077.5 275.1L1093.5 274.8L1109.5 275.8L1125.5 272L1141.5 272.4L1157.5 272.4L1173.5 269L1189.5 266.3L1205.5 266.3L1221.5 266L1237.5 263.2L1253.5 263.2L1269.5 258.4L1285.5 259L1301.5 259L1317.5 259L1333.5 261.8L1349.5 266.6L1365.5 272.8L1381.5 278.3" stroke="#ffff00" stroke-width="2" fill="none" stroke-linejoin="round"/>
</g>
<g clip-path="url(#c2)">
<path d="M5.5 948L21.5 940L37.5 931.75L53.5 920L69.5 910L85.5 897L101.5 899.25L117.5 863.75L133.5 831.25L149.5 825.5L165.5 827.5L181.5 826.25L197.5 822.5L213.5 822.5L229.5 823.75L245.5 826.75L261.5 831.25L277.5 837L293.5 840L309.5 839.5L325.5 843.75L341.5 845.5L357.5 840L373.5 840L389.5 855L405.5 864.25L421.5 863L437.5 856.25L453.5 856.25L469.5 855L485.5 849.25L501.5 866.25L517.5 882.5L533.5 899.25L549.5 894.5L565.5 883L581.5 887.5L597.5 890.5L613.5 917L629.5 923.75L645.5 930.5L661.5 931.75L677.5 936.25L693.5 932.5L709.5 941.25L725.5 922.5L741.5 902.5L757.5 886.25L773.5 884.25L789.5 877.5L805.5 875.5L821.5 864.5L837.5 842.5L853.5 827L869.5 821.25L885.5 826.25L901.5 830.5L917.5 828L933.5 833L949.5 838L965.5 836.25L981.5 838.25L997.5 839.5L1013.5 837.5L1029.5 852.5L1045.5 862.5L1061.5 868.75L1077.5 867L1093.5 863.25L1109.5 868.75L1125.5 855.5L1141.5 856.75L1157.5 862.5L1173.5 852.5L1189.5 848.75L1205.5 860L1221.5 865.5L1237.5 853.25L1253.5 857.5L1269.5 845.5L1285.5 858.75L1301.5 875.5L1317.5 873.25L1333.5 901.25L1349.5 916.25L1365.5 943.75L1381.5 960" stroke="#008000" stroke-width="1" fill="none" stroke-linejoin="round"/>
<path d="M5.5 939.5L21.5 939.25L37.5 937.5L53.5 935.75L69.5 932L85.5 927L101.5 923L117.5 914.5L133.5 902.5L149.5 891.25L165.5 882.5L181.5 874.5L197.5 867.5L213.5 860L229.5 855L245.5 851.25L261.5 848.75L277.5 847.5L293.5 846.25L309.5 845.5L325.5 845L341.5 845.5L357.5 844.25L373.5 843.75L389.5 845.5L405.5 848L421.5 850.5L437.5 851.75L453.5 852.5L469.5 853L485.5 852.5L501.5 854.5L517.5 858.75L533.5 864.5L549.5 868.25L565.5 870.75L581.5 873.25L597.5 875.75L613.5 881.25L629.5 887.5L645.5 893.75L661.5 899.5L677.5 904.5L693.5 908.75L709.5 913.5L725.5 913.75L741.5 911.25L757.5 907.5L773.5 904.5L789.5 900.5L805.5 897L821.5 893L837.5 885L853.5 877L869.5 869.5L885.5 863.25L901.5 858.25L917.5 854.5L933.5 851.75L949.5 849.25L965.5 847.5L981.5 846.25L997.5 845L1013.5 844.25L1029.5 845.75L1045.5 847.5L1061.5 850L1077.5 853L1093.5 854.5L1109.5 856.25L1125.5 856.25L1141.5 856.75L1157.5 857.5L1173.5 856.75L1189.5 855.5L1205.5 856.25L1221.5 857.5L1237.5 857L1253.5 857L1269.5 855.5L1285.5 856.25L1301.5 858.75L1317.5 861.25L1333.5 867L1349.5 874.5L1365.5 884.5L1381.5 893.75" stroke="#ffff00" stroke-width="1" fill="none" stroke-linejoin="round"/>
<path d="M5.5 942.5L21.5 939.25L37.5 935L53.5 930L69.5 924.5L85.5 917L101.5 915L117.5 896.25L133.5 878.75L149.5 868.75L165.5 863.75L181.5 857.5L197.5 852L213.5 848L229.5 845L245.5 843L261.5 842L277.5 843.75L293.5 843.75L309.5 843.25L325.5 844.5L341.5 845.5L357.5 842.5L373.5 843L389.5 848.75L405.5 853L421.5 854.5L437.5 853.75L453.5 853.75L469.5 853.75L485.5 852L501.5 857.5L517.5 866.25L533.5 875L549.5 877.5L565.5 875L581.5 877.5L597.5 881.25L613.5 893.75L629.5 900L645.5 905.5L661.5 909.5L677.5 915L693.5 916.75L709.5 922.5L725.5 916.25L741.5 908.75L757.5 901.25L773.5 897.5L789.5 893L805.5 890L821.5 882.5L837.5 870L853.5 860L869.5 853.25L885.5 851.25L901.5 848.75L917.5 845.5L933.5 845.5M949.5 846.25L965.5 843.25L981.5 843.25M997.5 843.25L1013.5 842.5L1029.5 847.5L1045.5 852.5L1061.5 856.25L1077.5 858L1093.5 857.5L1109.5 860.5L1125.5 856.25L1141.5 856.75L1157.5 859.5L1173.5 856.25L1189.5 853.75L1205.5 857.5L1221.5 860.5L1237.5 856.25L1253.5 857.5L1269.5 853L1285.5 857.5L1301.5 863.75L1317.5 865.5L1333.5 876.25L1349.5 888L1365.5 903.75L1381.5 915.5" stroke="#ff0000" stroke-width="1" fill="none" stroke-linejoin="round"/>
</g>
<rect x="1418" y="604" width="2" height="1" fill="#fff"/>
<rect x="1418" y="571" width="2" height="1" fill="#fff"/>
<rect x="1418" y="538" width="2" height="1" fill="#fff"/>
<rect x="1418" y="505" width="2" height="1" fill="#fff"/>
<rect x="1418" y="472" width="2" height="1" fill="#fff"/>
<rect x="1418" y="439" width="2" height="1" fill="#fff"/>
<rect x="1418" y="406" width="2" height="1" fill="#fff"/>
<rect x="1418" y="373" width="2" height="1" fill="#fff"/>
<rect x="1418" y="340" width="2" height="1" fill="#fff"/>
<rect x="1418" y="307" width="2" height="1" fill="#fff"/>
<rect x="1418" y="274" width="2" height="1" fill="#fff"/>
<rect x="1418" y="241" width="2" height="1" fill="#fff"/>
<rect x="1418" y="208" width="2" height="1" fill="#fff"/>
<rect x="1418" y="175" width="2" height="1" fill="#fff"/>
<rect x="1418" y="142" width="2" height="1" fill="#fff"/>
<rect x="1418" y="109" width="2" height="1" fill="#fff"/>
<rect x="1418" y="611" width="1" height="1" fill="#fff"/><rect x="1418" y="810" width="1" height="1" fill="#fff"/><rect x="1418" y="815" width="1" height="1" fill="#fff"/><rect x="1418" y="966" width="1" height="1" fill="#fff"/>
<rect x="5" y="968" width="1" height="3" fill="#fff"/>
<rect x="69" y="968" width="1" height="3" fill="#fff"/>
<rect x="133" y="968" width="1" height="3" fill="#fff"/>
<rect x="197" y="968" width="1" height="3" fill="#fff"/>
<rect x="261" y="968" width="1" height="3" fill="#fff"/>
<rect x="325" y="968" width="1" height="3" fill="#fff"/>
<rect x="389" y="968" width="1" height="3" fill="#fff"/>
<rect x="453" y="968" width="1" height="3" fill="#fff"/>
<rect x="517" y="968" width="1" height="3" fill="#fff"/>
<rect x="581" y="968" width="1" height="3" fill="#fff"/>
<rect x="645" y="968" width="1" height="3" fill="#fff"/>
<rect x="709" y="968" width="1" height="3" fill="#fff"/>
<rect x="773" y="968" width="1" height="3" fill="#fff"/>
<rect x="837" y="968" width="1" height="3" fill="#fff"/>
<rect x="901" y="968" width="1" height="3" fill="#fff"/>
<rect x="965" y="968" width="1" height="3" fill="#fff"/>
<rect x="1029" y="968" width="1" height="3" fill="#fff"/>
<rect x="1093" y="968" width="1" height="3" fill="#fff"/>
<rect x="1157" y="968" width="1" height="3" fill="#fff"/>
<rect x="1221" y="968" width="1" height="3" fill="#fff"/>
<rect x="1285" y="968" width="1" height="3" fill="#fff"/>
<rect x="1349" y="968" width="1" height="3" fill="#fff"/>
<rect x="1419" y="284" width="36" height="10" fill="#fff"/>
<rect x="1293" y="971" width="96" height="11" fill="#ff0000"/>
</g>
<path d="M1359.5 270.5h3v-2l4.5 4.5l-4.5 4.5v-2h-3z" fill="#ff69b4" stroke="#fff" stroke-width="1"/>
<text x="9" y="118.8" font-size="9.67" fill="#fff" textLength="186" lengthAdjust="spacingAndGlyphs" xml:space="preserve">EURJPY,Daily  128.53 128.55 128.31 128.33</text>
<text x="9" y="131" font-size="9.67" fill="#fff" textLength="85" lengthAdjust="spacingAndGlyphs" >counts of quotes:109</text>
<text x="5" y="148" font-size="15.7" fill="#00f0fa" >EquityRisked: 0.10%(9.90% still available)</text>
<text x="5" y="168" font-size="15.7" fill="#00f0fa" >Symbol</text>
<text x="155.5" y="168" font-size="15.7" fill="#00f0fa" >Counts</text>
<text x="225" y="168" font-size="15.7" fill="#00f0fa" >Profit</text>
<text x="5" y="188" font-size="15.7" fill="#00f0fa" >EURJPY</text>
<text x="155.5" y="188" font-size="15.7" fill="#00f0fa" >1</text>
<text x="225" y="188" font-size="15.7" fill="#00f0fa" >1.04</text>
<text x="5" y="208" font-size="15.7" fill="#00f0fa" >took 0.0ms quotes 15985</text>
<text x="5" y="228" font-size="15.7" fill="#00f0fa" textLength="444" lengthAdjust="spacingAndGlyphs" >NextTradeTime:2017.08.20 03:55:23 Date:2017.08.11 03:47:53</text>
<text x="12" y="247" font-size="9.57" fill="#fff" textLength="65.4" lengthAdjust="spacingAndGlyphs" >#1273179053 sl</text>
<text x="12" y="270" font-size="9.57" fill="#fff" textLength="92.5" lengthAdjust="spacingAndGlyphs" >#1273179053 sell 0.01</text>
<text x="12" y="347" font-size="9.57" fill="#fff" textLength="66.4" lengthAdjust="spacingAndGlyphs" >#1273179053 tp</text>
<text x="1342.5" y="120" font-size="9.57" fill="#fff" textLength="56.5" lengthAdjust="spacingAndGlyphs" >TwoMACross</text>
<circle cx="1406.5" cy="117.5" r="4.8" fill="none" stroke="#fff" stroke-width="1"/><circle cx="1404.7" cy="116" r="0.8" fill="#fff"/><circle cx="1408.3" cy="116" r="0.8" fill="#fff"/><path d="M1403.8 118.8q2.7 2.6 5.4 0" stroke="#fff" stroke-width="0.9" fill="none"/>
<text x="1423" y="608" font-size="9.57" fill="#fff" textLength="28" lengthAdjust="spacingAndGlyphs" >105.55</text>
<text x="1423" y="575" font-size="9.57" fill="#fff" textLength="28" lengthAdjust="spacingAndGlyphs" >107.95</text>
<text x="1423" y="542" font-size="9.57" fill="#fff" textLength="28" lengthAdjust="spacingAndGlyphs" >110.35</text>
<text x="1423" y="509" font-size="9.57" fill="#fff" textLength="28" lengthAdjust="spacingAndGlyphs" >112.70</text>
<text x="1423" y="476" font-size="9.57" fill="#fff" textLength="28" lengthAdjust="spacingAndGlyphs" >115.10</text>
<text x="1423" y="443" font-size="9.57" fill="#fff" textLength="28" lengthAdjust="spacingAndGlyphs" >117.45</text>
<text x="1423" y="410" font-size="9.57" fill="#fff" textLength="28" lengthAdjust="spacingAndGlyphs" >119.85</text>
<text x="1423" y="377" font-size="9.57" fill="#fff" textLength="28" lengthAdjust="spacingAndGlyphs" >122.20</text>
<text x="1423" y="344" font-size="9.57" fill="#fff" textLength="28" lengthAdjust="spacingAndGlyphs" >124.60</text>
<text x="1423" y="311" font-size="9.57" fill="#fff" textLength="28" lengthAdjust="spacingAndGlyphs" >127.00</text>
<text x="1423" y="278" font-size="9.57" fill="#fff" textLength="28" lengthAdjust="spacingAndGlyphs" >129.35</text>
<text x="1423" y="245" font-size="9.57" fill="#fff" textLength="28" lengthAdjust="spacingAndGlyphs" >131.75</text>
<text x="1423" y="212" font-size="9.57" fill="#fff" textLength="28" lengthAdjust="spacingAndGlyphs" >134.10</text>
<text x="1423" y="179" font-size="9.57" fill="#fff" textLength="28" lengthAdjust="spacingAndGlyphs" >136.50</text>
<text x="1423" y="146" font-size="9.57" fill="#fff" textLength="28" lengthAdjust="spacingAndGlyphs" >138.85</text>
<text x="1423" y="113" font-size="9.57" fill="#fff" textLength="28" lengthAdjust="spacingAndGlyphs" >141.25</text>
<text x="1423" y="292.5" font-size="9.57" fill="#000" textLength="28" lengthAdjust="spacingAndGlyphs" >128.33</text>
<text x="1421" y="620" font-size="9.57" fill="#fff" textLength="5.1" lengthAdjust="spacingAndGlyphs" >0</text>
<text x="1421" y="808" font-size="9.57" fill="#fff" textLength="5.1" lengthAdjust="spacingAndGlyphs" >0</text>
<g clip-path="url(#cr)">
<text x="1421" y="824" font-size="9.57" fill="#fff" textLength="38.3" lengthAdjust="spacingAndGlyphs" >120.9436</text>
<text x="1421" y="841" font-size="9.57" fill="#fff" textLength="15.3" lengthAdjust="spacingAndGlyphs" >100</text>
<text x="1421" y="863" font-size="9.57" fill="#fff" textLength="10.2" lengthAdjust="spacingAndGlyphs" >80</text>
<text x="1421" y="927.5" font-size="9.57" fill="#fff" textLength="10.2" lengthAdjust="spacingAndGlyphs" >20</text>
<text x="1421" y="949.5" font-size="9.57" fill="#fff" textLength="17.9" lengthAdjust="spacingAndGlyphs" >0.00</text>
<text x="1421" y="964" font-size="9.57" fill="#fff" textLength="31.2" lengthAdjust="spacingAndGlyphs" >-18.736</text>
</g>
<text x="5" y="980" font-size="9.57" fill="#fff" textLength="49.5" lengthAdjust="spacingAndGlyphs" >13 Apr 2017</text>
<text x="69" y="980" font-size="9.57" fill="#fff" textLength="49.5" lengthAdjust="spacingAndGlyphs" >19 Apr 2017</text>
<text x="133" y="980" font-size="9.57" fill="#fff" textLength="49.5" lengthAdjust="spacingAndGlyphs" >25 Apr 2017</text>
<text x="197" y="980" font-size="9.57" fill="#fff" textLength="48" lengthAdjust="spacingAndGlyphs" >1 May 2017</text>
<text x="261" y="980" font-size="9.57" fill="#fff" textLength="48" lengthAdjust="spacingAndGlyphs" >5 May 2017</text>
<text x="325" y="980" font-size="9.57" fill="#fff" textLength="52.4" lengthAdjust="spacingAndGlyphs" >11 May 2017</text>
<text x="389" y="980" font-size="9.57" fill="#fff" textLength="53.1" lengthAdjust="spacingAndGlyphs" >17 May 2017</text>
<text x="453" y="980" font-size="9.57" fill="#fff" textLength="53.1" lengthAdjust="spacingAndGlyphs" >23 May 2017</text>
<text x="517" y="980" font-size="9.57" fill="#fff" textLength="53.1" lengthAdjust="spacingAndGlyphs" >29 May 2017</text>
<text x="581" y="980" font-size="9.57" fill="#fff" textLength="45.5" lengthAdjust="spacingAndGlyphs" >2 Jun 2017</text>
<text x="645" y="980" font-size="9.57" fill="#fff" textLength="45.5" lengthAdjust="spacingAndGlyphs" >8 Jun 2017</text>
<text x="709" y="980" font-size="9.57" fill="#fff" textLength="50.6" lengthAdjust="spacingAndGlyphs" >14 Jun 2017</text>
<text x="773" y="980" font-size="9.57" fill="#fff" textLength="50.6" lengthAdjust="spacingAndGlyphs" >20 Jun 2017</text>
<text x="837" y="980" font-size="9.57" fill="#fff" textLength="50.6" lengthAdjust="spacingAndGlyphs" >26 Jun 2017</text>
<text x="901" y="980" font-size="9.57" fill="#fff" textLength="50.6" lengthAdjust="spacingAndGlyphs" >30 Jun 2017</text>
<text x="965" y="980" font-size="9.57" fill="#fff" textLength="42.4" lengthAdjust="spacingAndGlyphs" >6 Jul 2017</text>
<text x="1029" y="980" font-size="9.57" fill="#fff" textLength="47.5" lengthAdjust="spacingAndGlyphs" >12 Jul 2017</text>
<text x="1093" y="980" font-size="9.57" fill="#fff" textLength="47.5" lengthAdjust="spacingAndGlyphs" >18 Jul 2017</text>
<text x="1157" y="980" font-size="9.57" fill="#fff" textLength="47.5" lengthAdjust="spacingAndGlyphs" >24 Jul 2017</text>
<text x="1221" y="980" font-size="9.57" fill="#fff" textLength="47.5" lengthAdjust="spacingAndGlyphs" >28 Jul 2017</text>
<text x="1284" y="980" font-size="9.57" fill="#fff" textLength="5.1" lengthAdjust="spacingAndGlyphs" >3</text>
<text x="1390.5" y="980" font-size="9.57" fill="#fff" textLength="5.1" lengthAdjust="spacingAndGlyphs" >7</text>
<text x="1297.5" y="980" font-size="9.57" fill="#200000" textLength="88" lengthAdjust="spacingAndGlyphs" xml:space="preserve">2017.08.08 00:00 :00</text>
<text x="9" y="622" font-size="9.67" fill="#fff" textLength="176" lengthAdjust="spacingAndGlyphs" >StrongCurrency:EntryPercent(85.00%) H4</text>
<text x="5" y="636" font-size="12.2" fill="#fff" >No</text>
<text x="55" y="636" font-size="12.2" fill="#fff" >Symbol</text>
<text x="145" y="636" font-size="12.2" fill="#fff" >Buy Percent</text>
<text x="225" y="636" font-size="12.2" fill="#fff" >Sell Percent</text>
<text x="315" y="636" font-size="12.2" fill="#fff" >Last Buy signal</text>
<text x="585" y="636" font-size="12.2" fill="#fff" >Last Sell signal</text>
<g clip-path="url(#c1)">
<text x="12.3" y="651" font-size="12.2" fill="#fff" text-anchor="middle" >1</text>
<text x="55" y="651" font-size="12.2" fill="#fff" >GBPUSD</text>
<text x="145" y="651" font-size="12.2" fill="#fff" >17.65</text>
<text x="225" y="651" font-size="12.2" fill="#fff" >82.35</text>
<text x="12.3" y="665" font-size="12.2" fill="#fff" text-anchor="middle" >2</text>
<text x="55" y="665" font-size="12.2" fill="#fff" >EURUSD</text>
<text x="145" y="665" font-size="12.2" fill="#fff" >76.47</text>
<text x="225" y="665" font-size="12.2" fill="#fff" >29.41</text>
<text x="12.3" y="679" font-size="12.2" fill="#fff" text-anchor="middle" >3</text>
<text x="55" y="679" font-size="12.2" fill="#fff" >USDJPY</text>
<text x="145" y="679" font-size="12.2" fill="#fff" >5.88</text>
<text x="225" y="679" font-size="12.2" fill="#fff" >76.47</text>
<text x="12.3" y="693" font-size="12.2" fill="#fff" text-anchor="middle" >4</text>
<text x="55" y="693" font-size="12.2" fill="#fff" >USDCAD</text>
<text x="145" y="693" font-size="12.2" fill="#fff" >82.35</text>
<text x="225" y="693" font-size="12.2" fill="#fff" >23.53</text>
<text x="12.3" y="707" font-size="12.2" fill="#fff" text-anchor="middle" >5</text>
<text x="55" y="707" font-size="12.2" fill="#fff" >AUDUSD</text>
<text x="145" y="707" font-size="12.2" fill="#fff" >17.65</text>
<text x="225" y="707" font-size="12.2" fill="#fff" >70.59</text>
<text x="12.3" y="721" font-size="12.2" fill="#fff" text-anchor="middle" >6</text>
<text x="55" y="721" font-size="12.2" fill="#7cfc00" >EURGBP</text>
<text x="145" y="721" font-size="12.2" fill="#7cfc00" >88.24</text>
<text x="225" y="721" font-size="12.2" fill="#fff" >17.65</text>
<text x="315" y="721" font-size="12.2" fill="#7cfc00" >0.91 at 2017.08.11 03:37@88.24%</text>
<text x="12.3" y="735" font-size="12.2" fill="#fff" text-anchor="middle" >7</text>
<text x="55" y="735" font-size="12.2" fill="#7cfc00" >EURAUD</text>
<text x="145" y="735" font-size="12.2" fill="#7cfc00" >94.12</text>
<text x="225" y="735" font-size="12.2" fill="#fff" >23.53</text>
<text x="315" y="735" font-size="12.2" fill="#7cfc00" >1.50 at 2017.08.11 03:31@94.12%</text>
<text x="12.3" y="749" font-size="12.2" fill="#fff" text-anchor="middle" >8</text>
<text x="55" y="749" font-size="12.2" fill="#fff" >EURJPY</text>
<text x="145" y="749" font-size="12.2" fill="#fff" >11.76</text>
<text x="225" y="749" font-size="12.2" fill="#fff" >82.35</text>
<text x="12.3" y="763" font-size="12.2" fill="#fff" text-anchor="middle" >9</text>
<text x="55" y="763" font-size="12.2" fill="#fff" >CADJPY</text>
<text x="145" y="763" font-size="12.2" fill="#fff" >11.76</text>
<text x="225" y="763" font-size="12.2" fill="#fff" >82.35</text>
<text x="12.3" y="777" font-size="12.2" fill="#fff" text-anchor="middle" >10</text>
<text x="55" y="777" font-size="12.2" fill="#fff" >GBPJPY</text>
<text x="145" y="777" font-size="12.2" fill="#fff" >11.76</text>
<text x="225" y="777" font-size="12.2" fill="#fff" >82.35</text>
<text x="12.3" y="791" font-size="12.2" fill="#fff" text-anchor="middle" >11</text>
<text x="55" y="791" font-size="12.2" fill="#fff" >AUDNZD</text>
<text x="145" y="791" font-size="12.2" fill="#fff" >82.35</text>
<text x="225" y="791" font-size="12.2" fill="#fff" >17.65</text>
<text x="12.3" y="805" font-size="12.2" fill="#fff" text-anchor="middle" >12</text>
<text x="55" y="805" font-size="12.2" fill="#fff" >AUDCAD</text>
<text x="145" y="805" font-size="12.2" fill="#fff" >82.35</text>
<text x="225" y="805" font-size="12.2" fill="#fff" >17.65</text>
<text x="12.3" y="819" font-size="12.2" fill="#fff" text-anchor="middle" >13</text>
<text x="55" y="819" font-size="12.2" fill="#fff" >AUDJPY</text>
<text x="145" y="819" font-size="12.2" fill="#fff" >11.76</text>
<text x="225" y="819" font-size="12.2" fill="#fff" >82.35</text>
</g>
<text x="9" y="826" font-size="9.57" fill="#fff" textLength="208" lengthAdjust="spacingAndGlyphs" >KDJ(SoarSignal) 27.5825 47.5672 -12.3869 4.7319</text>
</svg>
<div class="a" style="left:0;top:990px;width:1px;height:20px;background:#808080"></div><div class="a" style="left:1px;top:990px;width:1px;height:20px;background:#404040"></div>
<div class="a" style="left:2px;top:990px;width:1454px;height:1px;background:#000"></div>
<div class="a" style="left:1050px;top:990px;width:96px;height:19px;box-sizing:border-box;background:#fff;border:1px solid #000;border-top:none"></div>
<div class="m" style="left:18px;top:992px;color:#202020">CADJPY,Daily</div>
<div class="m" style="left:114px;top:992px;color:#202020">EURUSD,Daily</div>
<div class="a" style="left:102px;top:993px;width:1px;height:14px;background:#404040"></div>
<div class="m" style="left:210px;top:992px;color:#202020">USDJPY,Daily</div>
<div class="a" style="left:198px;top:993px;width:1px;height:14px;background:#404040"></div>
<div class="m" style="left:306px;top:992px;color:#202020">NZDUSD,Daily</div>
<div class="a" style="left:294px;top:993px;width:1px;height:14px;background:#404040"></div>
<div class="m" style="left:402px;top:992px;color:#202020">GBPJPY,Daily</div>
<div class="a" style="left:390px;top:993px;width:1px;height:14px;background:#404040"></div>
<div class="m" style="left:498px;top:992px;color:#202020">AUDJPY,Daily</div>
<div class="a" style="left:486px;top:993px;width:1px;height:14px;background:#404040"></div>
<div class="m" style="left:594px;top:992px;color:#202020">GBPAUD,Daily</div>
<div class="a" style="left:582px;top:993px;width:1px;height:14px;background:#404040"></div>
<div class="m" style="left:690px;top:992px;color:#202020">EURNZD,Daily</div>
<div class="a" style="left:678px;top:993px;width:1px;height:14px;background:#404040"></div>
<div class="m" style="left:786px;top:992px;color:#202020">GOLD,Daily</div>
<div class="a" style="left:774px;top:993px;width:1px;height:14px;background:#404040"></div>
<div class="m" style="left:870px;top:992px;color:#202020">GBPNZD,Daily</div>
<div class="a" style="left:858px;top:993px;width:1px;height:14px;background:#404040"></div>
<div class="m" style="left:966px;top:992px;color:#202020">USDCAD,Daily</div>
<div class="a" style="left:954px;top:993px;width:1px;height:14px;background:#404040"></div>
<div class="m" style="left:1062px;top:992px;color:#202020">EURJPY,Daily</div>
<div class="m" style="left:1158px;top:992px;color:#202020">EURCAD,Daily</div>
<div class="m" style="left:1254px;top:992px;color:#202020">GBPNZD,Daily</div>
<div class="a" style="left:1242px;top:993px;width:1px;height:14px;background:#404040"></div>
<div class="m" style="left:1350px;top:992px;color:#202020">USDCAD,M15</div>
<div class="a" style="left:1338px;top:993px;width:1px;height:14px;background:#404040"></div>
<div class="a" style="left:1425px;top:995px;width:0;height:0;border-top:4px solid transparent;border-bottom:4px solid transparent;border-right:4px solid #000"></div>
<div class="a" style="left:1446px;top:995px;width:0;height:0;border-top:4px solid transparent;border-bottom:4px solid transparent;border-left:4px solid #909090"></div>
<div class="a" style="left:0;top:1010px;width:1456px;height:2px;background:#fff"></div>
<div class="a" style="left:1px;top:1028px;width:13px;height:171px;background:linear-gradient(to bottom,#b8b8b8 0,#808080 100%)"></div>
<div class="a" style="left:15px;top:1014px;width:1px;height:166px;background:#808080"></div><div class="a" style="left:15px;top:1014px;width:1440px;height:1px;background:#808080"></div>
<svg class="a" style="left:4px;top:1016px" width="8" height="8" viewBox="0 0 8 8" ><path d="M1 1.5L6 6.5M6 1.5L1 6.5" stroke="#000" stroke-width="1.6"/></svg>
<div class="s" style="left:1px;top:1197px;font-size:10.5px;line-height:13px;color:#d8d8d8;transform-origin:0 0;transform:rotate(-90deg)">Terminal</div>
<div class="a" style="left:16px;top:1031px;width:1438px;height:148px;background:#fff"></div>
<div class="th" style="left:16px;width:115px"></div>
<div class="m" style="left:22px;top:1017px">Order</div>
<div class="th" style="left:131px;width:160px"></div>
<div class="c" style="left:131px;width:135px;top:1017px">Time</div>
<div class="th" style="left:291px;width:80px"></div>
<div class="c" style="left:291px;width:75px;top:1017px">Type</div>
<div class="th" style="left:371px;width:62px"></div>
<div class="c" style="left:371px;width:57px;top:1017px">Size</div>
<div class="th" style="left:433px;width:80px"></div>
<div class="c" style="left:433px;width:75px;top:1017px">Symbol</div>
<div class="th" style="left:513px;width:89px"></div>
<div class="c" style="left:513px;width:84px;top:1017px">Price</div>
<div class="th" style="left:602px;width:89px"></div>
<div class="c" style="left:602px;width:84px;top:1017px">S / L</div>
<div class="th" style="left:691px;width:89px"></div>
<div class="c" style="left:691px;width:84px;top:1017px">T / P</div>
<div class="th" style="left:780px;width:89px"></div>
<div class="c" style="left:780px;width:84px;top:1017px">Price</div>
<div class="th" style="left:869px;width:89px"></div>
<div class="c" style="left:869px;width:84px;top:1017px">Commission</div>
<div class="th" style="left:958px;width:89px"></div>
<div class="c" style="left:958px;width:84px;top:1017px">Swap</div>
<div class="th" style="left:1047px;width:134px"></div>
<div class="c" style="left:1047px;width:129px;top:1017px">Profit</div>
<div class="th" style="left:1181px;width:273px"></div>
<div class="c" style="left:1181px;width:268px;top:1017px">Comment</div>
<svg class="a" style="left:278px;top:1018px" width="9" height="9" viewBox="0 0 9 9" ><path d="M4.5 1L8 7.5H1z" fill="#fff" stroke="#b0aca4" stroke-width="0.8"/></svg>
<div class="row" style="top:1031px;background:#0a246a"></div>
<svg class="a" style="left:19px;top:1033px" width="16" height="17" viewBox="0 0 16 17" ><path d="M1.5 1.5h7l3 3v9.5h-10z" fill="#fff" stroke="#8a8a8a" stroke-width="0.9"/><path d="M8.5 1.5v3h3z" fill="#dcdcdc" stroke="#8a8a8a" stroke-width="0.7"/><circle cx="11" cy="12.5" r="3.4" fill="#e8401a"/><circle cx="10.2" cy="11.6" r="1.1" fill="#fff" fill-opacity="0.5"/></svg>
<div class="m" style="left:38px;top:1035px;color:#fff">1273179053</div>
<div class="c" style="left:131px;width:156px;top:1035px;color:#fff">2017.08.10 03:55:23</div>
<div class="c" style="left:291px;width:76px;top:1035px;color:#fff">sell</div>
<div class="c" style="left:371px;width:58px;top:1035px;color:#fff">0.01</div>
<div class="c" style="left:433px;width:76px;top:1035px;color:#fff">eurjpy</div>
<div class="c" style="left:513px;width:85px;top:1035px;color:#fff">129.49</div>
<div class="c" style="left:602px;width:85px;top:1035px;color:#fff">131.19</div>
<div class="c" style="left:691px;width:85px;top:1035px;color:#fff">123.94</div>
<div class="c" style="left:780px;width:85px;top:1035px;color:#fff">128.36</div>
<div class="c" style="left:869px;width:85px;top:1035px;color:#fff">0.00</div>
<div class="c" style="left:958px;width:85px;top:1035px;color:#fff">0.00</div>
<div class="c" style="left:1047px;width:110px;top:1035px;color:#fff">1.04</div>
<div class="c" style="left:1181px;width:269px;top:1035px;color:#fff">D1-MA5-10-810080</div>
<svg class="a" style="left:1166px;top:1037px" width="9" height="9" viewBox="0 0 9 9" ><path d="M1.5 1.5L7.5 7.5M7.5 1.5L1.5 7.5" stroke="#8a8a8a" stroke-width="1.8"/></svg>
<div class="row" style="top:1051px;background:#ebebeb"></div>
<div class="a" style="left:16px;top:1070px;width:1438px;height:1px;background:#dcdcdc"></div>
<svg class="a" style="left:19px;top:1053px" width="16" height="17" viewBox="0 0 16 17" ><path d="M1.5 1.5h7l3 3v9.5h-10z" fill="#fff" stroke="#8a8a8a" stroke-width="0.9"/><path d="M8.5 1.5v3h3z" fill="#dcdcdc" stroke="#8a8a8a" stroke-width="0.7"/><circle cx="11" cy="12.5" r="3.4" fill="#2a9af0"/><circle cx="10.2" cy="11.6" r="1.1" fill="#fff" fill-opacity="0.5"/></svg>
<div class="m" style="left:38px;top:1055px;color:#000">1273267625</div>
<div class="c" style="left:131px;width:156px;top:1055px;color:#000">2017.08.10 13:34:51</div>
<div class="c" style="left:291px;width:76px;top:1055px;color:#000">buy</div>
<div class="c" style="left:371px;width:58px;top:1055px;color:#000">0.01</div>
<div class="c" style="left:433px;width:76px;top:1055px;color:#000">usdcad</div>
<div class="c" style="left:513px;width:85px;top:1055px;color:#000">1.2733</div>
<div class="c" style="left:602px;width:85px;top:1055px;color:#000">0.0000</div>
<div class="c" style="left:691px;width:85px;top:1055px;color:#000">1.2833</div>
<div class="c" style="left:780px;width:85px;top:1055px;color:#000">1.2736</div>
<div class="c" style="left:869px;width:85px;top:1055px;color:#000">0.00</div>
<div class="c" style="left:958px;width:85px;top:1055px;color:#000">0.00</div>
<div class="c" style="left:1047px;width:110px;top:1055px;color:#000">0.02</div>
<div class="c" style="left:1181px;width:269px;top:1055px;color:#000">Ilan1New-0-12324</div>
<svg class="a" style="left:1166px;top:1057px" width="9" height="9" viewBox="0 0 9 9" ><path d="M1.5 1.5L7.5 7.5M7.5 1.5L1.5 7.5" stroke="#8a8a8a" stroke-width="1.8"/></svg>
<div class="row" style="top:1071px;background:#ffffff"></div>
<div class="a" style="left:16px;top:1090px;width:1438px;height:1px;background:#dcdcdc"></div>
<svg class="a" style="left:19px;top:1073px" width="16" height="17" viewBox="0 0 16 17" ><path d="M1.5 1.5h7l3 3v9.5h-10z" fill="#fff" stroke="#8a8a8a" stroke-width="0.9"/><path d="M8.5 1.5v3h3z" fill="#dcdcdc" stroke="#8a8a8a" stroke-width="0.7"/><circle cx="11" cy="12.5" r="3.4" fill="#e8401a"/><circle cx="10.2" cy="11.6" r="1.1" fill="#fff" fill-opacity="0.5"/></svg>
<div class="m" style="left:38px;top:1075px;color:#000">1273377371</div>
<div class="c" style="left:131px;width:156px;top:1075px;color:#000">2017.08.11 00:00:41</div>
<div class="c" style="left:291px;width:76px;top:1075px;color:#000">sell</div>
<div class="c" style="left:371px;width:58px;top:1075px;color:#000">0.01</div>
<div class="c" style="left:433px;width:76px;top:1075px;color:#000">eurusd</div>
<div class="c" style="left:513px;width:85px;top:1075px;color:#000">1.1770</div>
<div class="c" style="left:602px;width:85px;top:1075px;color:#000">1.6770</div>
<div class="c" style="left:691px;width:85px;top:1075px;color:#000">0.5885</div>
<div class="c" style="left:780px;width:85px;top:1075px;color:#000">1.1776</div>
<div class="c" style="left:869px;width:85px;top:1075px;color:#000">0.00</div>
<div class="c" style="left:958px;width:85px;top:1075px;color:#000">0.00</div>
<div class="c" style="left:1047px;width:110px;top:1075px;color:#000">-0.06</div>
<div class="c" style="left:1181px;width:269px;top:1075px;color:#000">D1-MA5-10-810010</div>
<svg class="a" style="left:1166px;top:1077px" width="9" height="9" viewBox="0 0 9 9" ><path d="M1.5 1.5L7.5 7.5M7.5 1.5L1.5 7.5" stroke="#8a8a8a" stroke-width="1.8"/></svg>
<div class="a" style="left:130px;top:1031px;width:1px;height:60px;background:#d0d0d0"></div>
<div class="a" style="left:290px;top:1031px;width:1px;height:60px;background:#d0d0d0"></div>
<div class="a" style="left:370px;top:1031px;width:1px;height:60px;background:#d0d0d0"></div>
<div class="a" style="left:432px;top:1031px;width:1px;height:60px;background:#d0d0d0"></div>
<div class="a" style="left:512px;top:1031px;width:1px;height:60px;background:#d0d0d0"></div>
<div class="a" style="left:601px;top:1031px;width:1px;height:60px;background:#d0d0d0"></div>
<div class="a" style="left:690px;top:1031px;width:1px;height:60px;background:#d0d0d0"></div>
<div class="a" style="left:779px;top:1031px;width:1px;height:60px;background:#d0d0d0"></div>
<div class="a" style="left:868px;top:1031px;width:1px;height:60px;background:#d0d0d0"></div>
<div class="a" style="left:957px;top:1031px;width:1px;height:60px;background:#d0d0d0"></div>
<div class="a" style="left:1046px;top:1031px;width:1px;height:60px;background:#d0d0d0"></div>
<div class="a" style="left:1180px;top:1031px;width:1px;height:60px;background:#d0d0d0"></div>
<div class="a" style="left:1453px;top:1031px;width:1px;height:60px;background:#d0d0d0"></div>
<div class="row" style="top:1091px;background:#c8c8c8"></div>
<svg class="a" style="left:19px;top:1093px" width="13" height="16" viewBox="0 0 13 16" ><rect x="0.5" y="0.5" width="11" height="14" fill="#fff" stroke="#8a8a8a" stroke-width="0.9"/><path d="M6 3l4 4.2h-2.4v3.8h-3.2v-3.8h-2.4z" fill="#22b422" stroke="#0a7a0a" stroke-width="0.6"/></svg>
<div class="mb" style="left:38px;top:1095px">Balance: 1 500.26 USD  Equity: 1 501.26  Margin: 0.34  Free margin: 1 500.92  Margin level: 447783.10%</div>
<div class="mb" style="left:1047px;width:110px;text-align:right;top:1095px">1.00</div>
<div class="a" style="left:16px;top:1179px;width:1438px;height:1px;background:#000"></div>
<div class="a" style="left:18px;top:1179px;width:50px;height:17px;box-sizing:border-box;background:#fff;border:1px solid #000;border-top:none"></div>
<div class="m" style="left:28px;top:1181px">Trade</div>
<div class="m" style="left:78px;top:1181px;color:#202020">Exposure</div>
<div class="a" style="left:137px;top:1181px;width:1px;height:11px;background:#404040"></div>
<div class="m" style="left:146px;top:1181px;color:#202020">Account History</div>
<div class="a" style="left:247px;top:1181px;width:1px;height:11px;background:#404040"></div>
<div class="m" style="left:256px;top:1181px;color:#202020">News</div>
<div class="a" style="left:305px;top:1181px;width:1px;height:11px;background:#404040"></div>
<div class="m" style="left:314px;top:1181px;color:#202020">Alerts</div>
<div class="a" style="left:361px;top:1181px;width:1px;height:11px;background:#404040"></div>
<div class="m" style="left:370px;top:1181px;color:#202020">Mailbox</div>
<div class="a" style="left:431px;top:1181px;width:1px;height:11px;background:#404040"></div>
<div class="m" style="left:439px;top:1181px;color:#202020">Market</div>
<div class="a" style="left:501px;top:1181px;width:1px;height:11px;background:#404040"></div>
<div class="m" style="left:510px;top:1181px;color:#202020">Signals</div>
<div class="a" style="left:563px;top:1181px;width:1px;height:11px;background:#404040"></div>
<div class="m" style="left:571px;top:1181px;color:#202020">Code Base</div>
<div class="a" style="left:637px;top:1181px;width:1px;height:11px;background:#404040"></div>
<div class="m" style="left:646px;top:1181px;color:#202020">Experts</div>
<div class="a" style="left:699px;top:1181px;width:1px;height:11px;background:#404040"></div>
<div class="m" style="left:708px;top:1181px;color:#202020">Journal</div>
<div class="a" style="left:761px;top:1181px;width:1px;height:11px;background:#404040"></div>
<div class="s" style="left:282px;top:1187px;font-size:8.5px;font-weight:bold;line-height:10px;color:#f01010">96</div>
<div class="s" style="left:414px;top:1187px;font-size:8.5px;font-weight:bold;line-height:10px;color:#f01010">8</div>
<div class="s" style="left:478px;top:1187px;font-size:8.5px;font-weight:bold;line-height:10px;color:#f01010">41</div>
<div class="a" style="left:0;top:1198px;width:1456px;height:2px;background:#fff"></div><div class="a" style="left:0;top:1201px;width:1456px;height:1px;background:#808080"></div><div class="a" style="left:0;top:1202px;width:1456px;height:1px;background:#fff"></div>
<div class="m" style="left:2px;top:1209px">For Help, press F1</div>
<div class="a" style="left:571px;top:1205px;width:1px;height:20px;background:#808080"></div><div class="a" style="left:572px;top:1205px;width:1px;height:20px;background:#fff"></div>
<div class="a" style="left:736px;top:1205px;width:1px;height:20px;background:#808080"></div><div class="a" style="left:737px;top:1205px;width:1px;height:20px;background:#fff"></div>
<div class="a" style="left:852px;top:1205px;width:1px;height:20px;background:#808080"></div><div class="a" style="left:853px;top:1205px;width:1px;height:20px;background:#fff"></div>
<div class="a" style="left:938px;top:1205px;width:1px;height:20px;background:#808080"></div><div class="a" style="left:939px;top:1205px;width:1px;height:20px;background:#fff"></div>
<div class="a" style="left:1024px;top:1205px;width:1px;height:20px;background:#808080"></div><div class="a" style="left:1025px;top:1205px;width:1px;height:20px;background:#fff"></div>
<div class="a" style="left:1110px;top:1205px;width:1px;height:20px;background:#808080"></div><div class="a" style="left:1111px;top:1205px;width:1px;height:20px;background:#fff"></div>
<div class="a" style="left:1196px;top:1205px;width:1px;height:20px;background:#808080"></div><div class="a" style="left:1197px;top:1205px;width:1px;height:20px;background:#fff"></div>
<div class="a" style="left:1281px;top:1205px;width:1px;height:20px;background:#808080"></div><div class="a" style="left:1282px;top:1205px;width:1px;height:20px;background:#fff"></div>
<div class="m" style="left:577px;top:1209px">Swiss Franc</div>
<svg class="a" style="left:1287px;top:1208px" width="24" height="13" viewBox="0 0 24 13" ><rect x="0" y="0" width="1.6" height="10" fill="#6b8e23"/><rect x="0" y="10" width="1.6" height="3" fill="#1a4a8a"/><rect x="3" y="0" width="1.6" height="9.1" fill="#6b8e23"/><rect x="3" y="9.1" width="1.6" height="3.9" fill="#1a4a8a"/><rect x="6" y="0" width="1.6" height="8.2" fill="#6b8e23"/><rect x="6" y="8.2" width="1.6" height="4.8" fill="#1a4a8a"/><rect x="9" y="0" width="1.6" height="7.3" fill="#6b8e23"/><rect x="9" y="7.3" width="1.6" height="5.7" fill="#1a4a8a"/><rect x="12" y="0" width="1.6" height="6.4" fill="#6b8e23"/><rect x="12" y="6.4" width="1.6" height="6.6" fill="#1a4a8a"/><rect x="15" y="0" width="1.6" height="5.5" fill="#6b8e23"/><rect x="15" y="5.5" width="1.6" height="7.5" fill="#1a4a8a"/><rect x="18" y="0" width="1.6" height="4.6" fill="#6b8e23"/><rect x="18" y="4.6" width="1.6" height="8.4" fill="#1a4a8a"/><rect x="21" y="0" width="1.6" height="3.7" fill="#6b8e23"/><rect x="21" y="3.7" width="1.6" height="9.3" fill="#1a4a8a"/></svg>
<div class="m" style="left:1314px;top:1209px">60803/1700 kb</div>
<svg class="a" style="left:1443px;top:1212px" width="13" height="13" viewBox="0 0 13 13" ><path d="M12 1L1 12M12 5L5 12M12 9L9 12" stroke="#808080" stroke-width="1.2"/><path d="M13 2L2 13M13 6L6 13M13 10L10 13" stroke="#fff" stroke-width="1"/></svg>
</body></html>
